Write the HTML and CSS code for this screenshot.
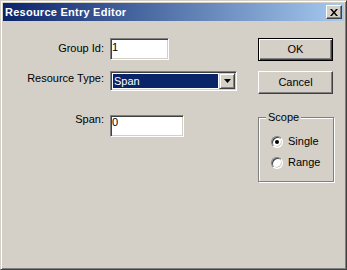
FILE: index.html
```html
<!DOCTYPE html>
<html lang="en">
<head>
    <meta charset="UTF-8">
    <title>Resource Entry Editor</title>
    <link rel="stylesheet" href="styles.css">
</head>
<body>

    <div class="window">
        <div class="titlebar">
            <span class="title">Resource Entry Editor</span>
            <button class="close" title="Close">
                <svg width="8" height="7" viewBox="0 0 8 7">
                    <path d="M0 0h2l2 2.5 2-2.5h2l-3 3.5 3 3.5h-2l-2-2.5-2 2.5h-2l3-3.5z" fill="#000"/>
                </svg>
            </button>
        </div>

        <div class="content">
            <div class="form">
                <div class="field field-group">
                    <label for="groupId">Group Id:</label>
                    <input type="text" id="groupId" class="edit edit-short" value="1">
                </div>
                <div class="field field-type">
                    <label>Resource Type:</label>
                    <div class="combo">
                        <span class="combo-value">Span</span>
                        <span class="combo-btn">
                            <svg width="7" height="4" viewBox="0 0 7 4"><path d="M0 0h7l-3.5 4z" fill="#000"/></svg>
                        </span>
                    </div>
                </div>
                <div class="field field-span">
                    <label for="span">Span:</label>
                    <input type="text" id="span" class="edit edit-long" value="0">
                </div>
            </div>

            <div class="actions">
                <button class="btn btn-default">OK</button>
                <button class="btn btn-cancel">Cancel</button>
                <fieldset class="scope">
                    <legend>Scope</legend>
                    <label class="radio"><span class="radio-mark checked"><span class="dot"></span></span>Single</label>
                    <label class="radio radio-second"><span class="radio-mark"></span>Range</label>
                </fieldset>
            </div>
        </div>
    </div>

</body>
</html>
```

FILE: styles.css
```css
* {
    box-sizing: border-box;
}

body {
    margin: 0;
    font-family: "Liberation Sans", Arial, sans-serif;
    font-size: 11px;
    line-height: 13px;
    color: #000;
    background-color: #d4d0c8;
}

/* window frame */
.window {
    width: 347px;
    height: 270px;
    background-color: #d4d0c8;
    border: 1px solid;
    border-color: #d4d0c8 #404040 #404040 #d4d0c8;
    box-shadow: inset 1px 1px #fff, inset -1px -1px #808080;
    padding: 2px;
}

.titlebar {
    height: 18px;
    display: flex;
    align-items: center;
    justify-content: space-between;
    padding: 0 2px;
    background: linear-gradient(to right, #0a246a, #a6caf0);
}

.title {
    color: #fff;
    font-weight: bold;
    letter-spacing: 0.25px;
}

.close {
    width: 16px;
    height: 14px;
    padding: 0;
    margin: 0;
    display: flex;
    align-items: center;
    justify-content: center;
    background-color: #d4d0c8;
    border: 1px solid;
    border-color: #fff #404040 #404040 #fff;
    box-shadow: inset -1px -1px #808080;
}

.content {
    display: flex;
    padding: 17px 10px 0 0;
}

/* left side */
.form {
    flex: 1;
}

.field {
    display: flex;
    align-items: flex-start;
}

.field label {
    width: 101px;
    margin-right: 6px;
    text-align: right;
}

.field-group label {
    margin-top: 4px;
}

.field-type {
    margin-top: 11px;
}

.field-type label {
    margin-top: 1px;
}

.field-span {
    margin-top: 24px;
}

.field-span label {
    margin-top: -2px;
}

.edit {
    height: 22px;
    margin: 0;
    padding: 0 1px 4px;
    font: inherit;
    color: #000;
    background-color: #fff;
    border: 1px solid;
    border-color: #808080 #fff #fff #808080;
    box-shadow: inset 1px 1px #404040, inset -1px -1px #d4d0c8;
    outline: none;
}

.edit-short {
    width: 59px;
}

.edit-long {
    width: 74px;
    padding-bottom: 8px;
}

.combo {
    width: 127px;
    height: 20px;
    display: flex;
    padding: 1px;
    background-color: #fff;
    border: 1px solid;
    border-color: #808080 #fff #fff #808080;
    box-shadow: inset 1px 1px #404040, inset -1px -1px #d4d0c8;
}

.combo-value {
    flex: 1;
    margin: 1px;
    padding-left: 1px;
    line-height: 14px;
    color: #fff;
    background-color: #0a246a;
}

.combo-btn {
    width: 16px;
    display: flex;
    align-items: center;
    justify-content: center;
    background-color: #d4d0c8;
    border: 1px solid;
    border-color: #d4d0c8 #404040 #404040 #d4d0c8;
    box-shadow: inset 1px 1px #fff, inset -1px -1px #808080;
}

/* right side */
.actions {
    width: 76px;
    display: flex;
    flex-direction: column;
    align-items: flex-start;
}

.btn {
    width: 75px;
    height: 23px;
    margin: 0;
    padding: 0;
    font: inherit;
    color: #000;
    background-color: #d4d0c8;
    border: 1px solid;
    border-color: #fff #404040 #404040 #fff;
    box-shadow: inset -1px -1px #808080;
}

.btn-default {
    border-color: #000;
    box-shadow: inset 1px 1px #fff, inset -1px -1px #404040, inset -2px -2px #808080;
}

.btn-cancel {
    margin-top: 10px;
}

.scope {
    width: 76px;
    margin: 17px 0 0;
    padding: 11px 0 12px 7px;
    border: 1px solid #808080;
    box-shadow: inset 1px 1px #fff, 1px 1px #fff;
}

.scope legend {
    padding: 0 2px;
    background-color: #d4d0c8;
}

.radio {
    display: flex;
    align-items: center;
    height: 13px;
    margin-left: 5px;
}

.radio-second {
    margin-top: 8px;
}

.radio-mark {
    width: 12px;
    height: 12px;
    margin-right: 5px;
    display: flex;
    align-items: center;
    justify-content: center;
    border-radius: 50%;
    background-color: #fff;
    border: 1px solid;
    border-color: #808080 #fff #fff #808080;
    box-shadow: inset 1px 1px #404040, inset -1px -1px #d4d0c8;
}

.dot {
    width: 4px;
    height: 4px;
    border-radius: 50%;
    background-color: #000;
}
```
